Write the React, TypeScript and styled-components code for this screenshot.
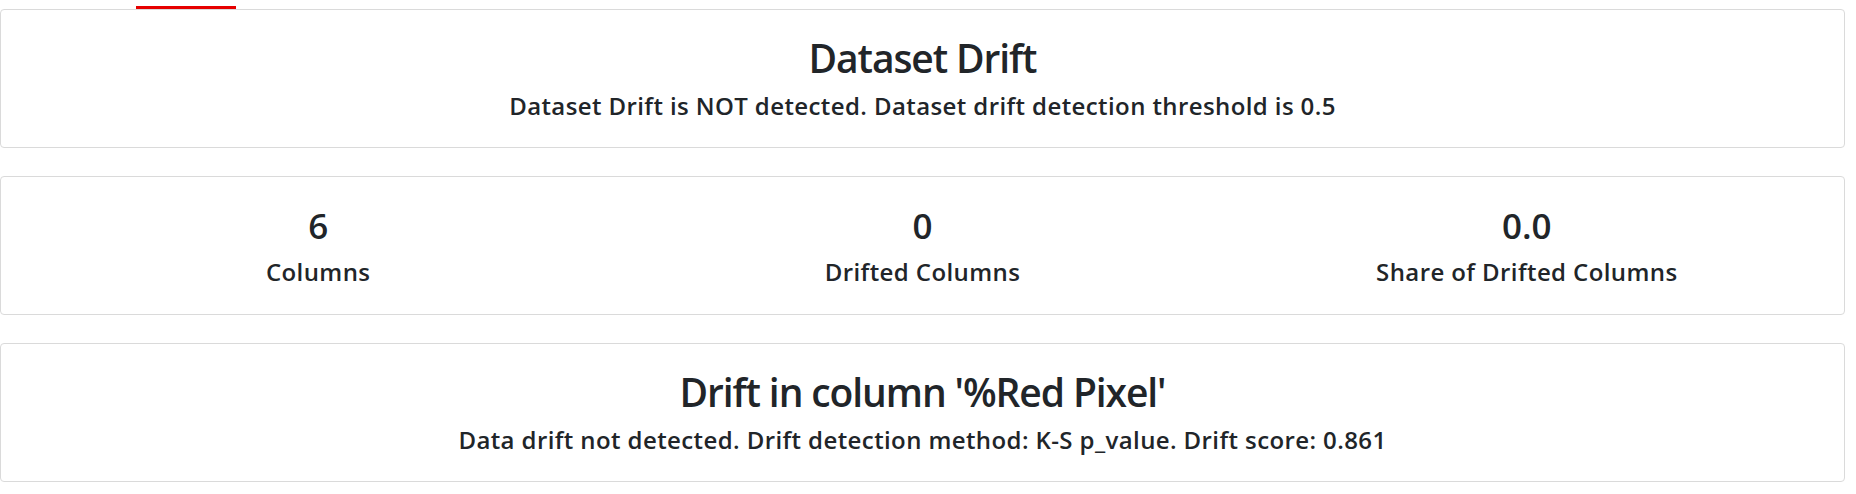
import { createGlobalStyle, styled } from 'styled-components';

type Counter = {
  value: string;
  label: string;
};

const COUNTERS: Counter[] = [
  { value: '6', label: 'Columns' },
  { value: '0', label: 'Drifted Columns' },
  { value: '0.0', label: 'Share of Drifted Columns' },
];

const GlobalStyle = createGlobalStyle`
  body {
    margin: 0;
    background: #fff;
    color: #212529;
    font-family: 'Open Sans', 'Noto Sans', sans-serif;
  }
`;

const App = () => {
  return (
    <>
      <GlobalStyle />
      <SPage>
        <STabStrip>
          <STabIndicator />
        </STabStrip>
        <SCardList>
          <SCard>
            <STitle>Dataset Drift</STitle>
            <SSubtitle>Dataset Drift is NOT detected. Dataset drift detection threshold is 0.5</SSubtitle>
          </SCard>
          <SCounterCard>
            {COUNTERS.map(({ value, label }) => (
              <SCounter key={label}>
                <SCounterValue>{value}</SCounterValue>
                <SCounterLabel>{label}</SCounterLabel>
              </SCounter>
            ))}
          </SCounterCard>
          <SCard>
            <STitle>Drift in column '%Red Pixel'</STitle>
            <SSubtitle>
              Data drift not detected. Drift detection method: K-S p_value. Drift score: 0.861
            </SSubtitle>
          </SCard>
        </SCardList>
      </SPage>
    </>
  );
};

const SPage = styled.div`
  width: 1845px;
`;

const STabStrip = styled.div`
  height: 9px;
  display: flex;
  align-items: flex-end;
  padding-left: 136px;
`;

const STabIndicator = styled.div`
  width: 100px;
  height: 3px;
  background: #e60000;
`;

const SCardList = styled.div`
  display: flex;
  flex-direction: column;
  gap: 28px;
`;

const SCard = styled.section`
  box-sizing: border-box;
  height: 139px;
  padding: 25px 15px 0;
  border: 1px solid #dadada;
  border-radius: 4px;
  text-align: center;
`;

const SCounterCard = styled(SCard)`
  display: grid;
  grid-template-columns: repeat(3, 1fr);
  padding-top: 28px;
`;

const STitle = styled.h2`
  margin: 0;
  font-size: 39px;
  line-height: 46px;
  font-weight: 600;
  letter-spacing: -1.1px;
`;

const SSubtitle = styled.p`
  margin: 9px 0 0;
  font-size: 24px;
  line-height: 32px;
  font-weight: 600;
  letter-spacing: 0.4px;
`;

const SCounter = styled.div`
  display: flex;
  flex-direction: column;
  align-items: center;
`;

const SCounterValue = styled.div`
  font-size: 35px;
  line-height: 42px;
  font-weight: 600;
`;

const SCounterLabel = styled.div`
  margin-top: 9px;
  font-size: 24px;
  line-height: 32px;
  font-weight: 600;
  letter-spacing: 0.4px;
`;

export default App;
